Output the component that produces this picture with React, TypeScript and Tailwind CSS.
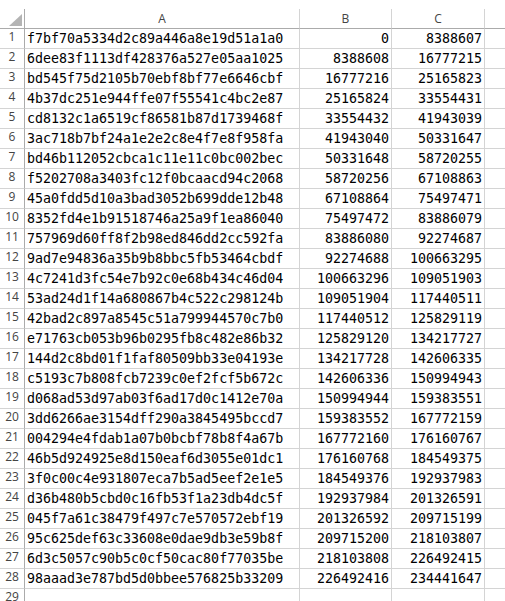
const ROWS: [string, number, number][] = [
  ["f7bf70a5334d2c89a446a8e19d51a1a0", 0, 8388607],
  ["6dee83f1113df428376a527e05aa1025", 8388608, 16777215],
  ["bd545f75d2105b70ebf8bf77e6646cbf", 16777216, 25165823],
  ["4b37dc251e944ffe07f55541c4bc2e87", 25165824, 33554431],
  ["cd8132c1a6519cf86581b87d1739468f", 33554432, 41943039],
  ["3ac718b7bf24a1e2e2c8e4f7e8f958fa", 41943040, 50331647],
  ["bd46b112052cbca1c11e11c0bc002bec", 50331648, 58720255],
  ["f5202708a3403fc12f0bcaacd94c2068", 58720256, 67108863],
  ["45a0fdd5d10a3bad3052b699dde12b48", 67108864, 75497471],
  ["8352fd4e1b91518746a25a9f1ea86040", 75497472, 83886079],
  ["757969d60ff8f2b98ed846dd2cc592fa", 83886080, 92274687],
  ["9ad7e94836a35b9b8bbc5fb53464cbdf", 92274688, 100663295],
  ["4c7241d3fc54e7b92c0e68b434c46d04", 100663296, 109051903],
  ["53ad24d1f14a680867b4c522c298124b", 109051904, 117440511],
  ["42bad2c897a8545c51a799944570c7b0", 117440512, 125829119],
  ["e71763cb053b96b0295fb8c482e86b32", 125829120, 134217727],
  ["144d2c8bd01f1faf80509bb33e04193e", 134217728, 142606335],
  ["c5193c7b808fcb7239c0ef2fcf5b672c", 142606336, 150994943],
  ["d068ad53d97ab03f6ad17d0c1412e70a", 150994944, 159383551],
  ["3dd6266ae3154dff290a3845495bccd7", 159383552, 167772159],
  ["004294e4fdab1a07b0bcbf78b8f4a67b", 167772160, 176160767],
  ["46b5d924925e8d150eaf6d3055e01dc1", 176160768, 184549375],
  ["3f0c00c4e931807eca7b5ad5eef2e1e5", 184549376, 192937983],
  ["d36b480b5cbd0c16fb53f1a23db4dc5f", 192937984, 201326591],
  ["045f7a61c38479f497c7e570572ebf19", 201326592, 209715199],
  ["95c625def63c33608e0dae9db3e59b8f", 209715200, 218103807],
  ["6d3c5057c90b5c0cf50cac80f77035be", 218103808, 226492415],
  ["98aaad3e787bd5d0bbee576825b33209", 226492416, 234441647],
];

const head = "font-['Open_Sans','Noto_Sans',sans-serif] text-[12px] text-[#444]";
const mono = "font-['DejaVu_Sans_Mono','Liberation_Mono',monospace] text-[13.3px] text-black";

function Row({ n, a, b, c }: { n: number; a: string; b: string; c: string }) {
  return (
    <div className="flex h-[20px]">
      <div className={`w-[25px] shrink-0 border-r border-b border-r-[#ababab] border-b-[#d4d4d4] flex items-end justify-center pb-[2px] ${head}`}>
        {n}
      </div>
      <div className={`w-[275px] shrink-0 border-r border-b border-[#d4d4d4] flex items-end pl-[2px] pb-[2px] leading-none ${mono}`}>
        <span className="pb-[1px]">{a}</span>
      </div>
      <div className={`w-[92px] shrink-0 border-r border-b border-[#d4d4d4] flex items-end justify-end pr-[2px] pb-[2px] leading-none ${mono}`}>
        <span className="pb-[1px]">{b}</span>
      </div>
      <div className={`w-[93px] shrink-0 border-r border-b border-[#d4d4d4] flex items-end justify-end pr-[2px] pb-[2px] leading-none ${mono}`}>
        <span className="pb-[1px]">{c}</span>
      </div>
      <div className="flex-1 border-b border-[#d4d4d4]" />
    </div>
  );
}

export default function App() {
  return (
    <div className="w-[505px] h-[601px] overflow-hidden bg-white pt-[9px]">
      {/* column headers */}
      <div className={`flex h-[20px] ${head}`}>
        <div className="w-[25px] shrink-0 border-r border-b border-[#ababab] relative">
          <svg className="absolute left-[9px] top-[5px]" width="13" height="12" viewBox="0 0 13 12">
            <polygon points="13,0 13,12 0,12" fill="#b4b4b4" />
          </svg>
        </div>
        <div className="w-[275px] shrink-0 border-r border-r-[#d4d4d4] border-b border-b-[#ababab] flex items-center justify-center">A</div>
        <div className="w-[92px] shrink-0 border-r border-r-[#d4d4d4] border-b border-b-[#ababab] flex items-center justify-center">B</div>
        <div className="w-[93px] shrink-0 border-r border-r-[#d4d4d4] border-b border-b-[#ababab] flex items-center justify-center">C</div>
        <div className="flex-1 border-b border-b-[#ababab]" />
      </div>
      {ROWS.map(([a, b, c], i) => (
        <Row key={i} n={i + 1} a={a} b={String(b)} c={String(c)} />
      ))}
      <Row n={29} a="" b="" c="" />
    </div>
  );
}
